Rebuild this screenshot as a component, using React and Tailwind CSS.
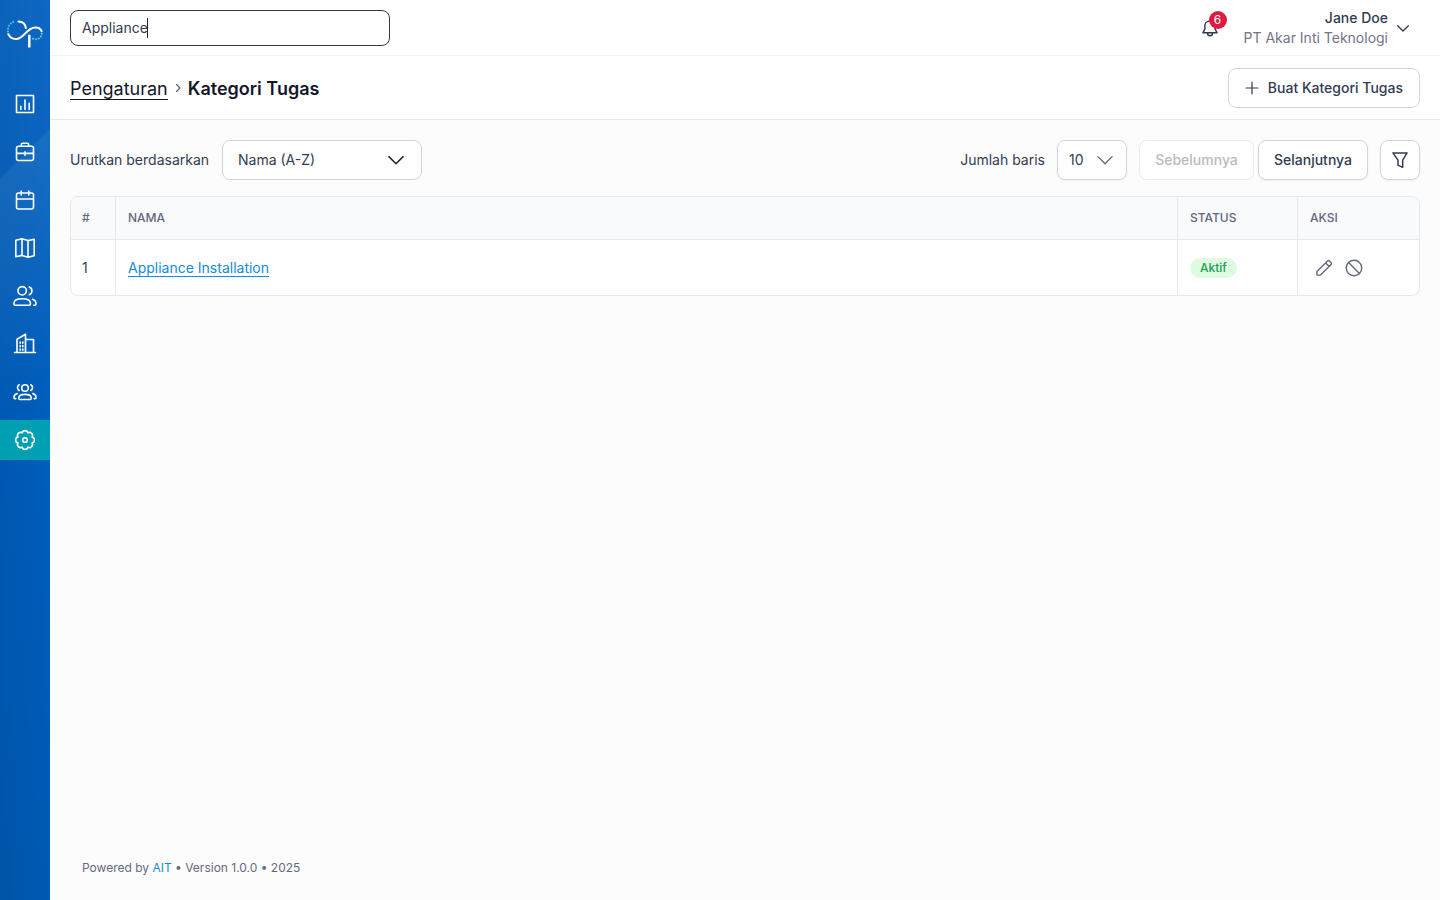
import clsx from 'clsx';

function Icon({ children, className = 'size-6', strokeWidth = 1.5 }) {
  return (
    <svg
      viewBox="0 0 24 24"
      fill="none"
      stroke="currentColor"
      strokeWidth={strokeWidth}
      strokeLinecap="round"
      strokeLinejoin="round"
      className={clsx('shrink-0', className)}
    >
      {children}
    </svg>
  );
}

const menus = [
  {
    name: 'dashboard',
    icon: <path d="M3.5 3.5h17v17h-17zM7.8 14.3v3.2M12 8v9.500M16.200 11.300v6.200" />,
  },
  {
    name: 'tasks',
    icon: (
      <path d="M5.500 6.200h13a2 2 0 0 1 2 2v10.300a2 2 0 0 1-2 2h-13a2 2 0 0 1-2-2V8.200a2 2 0 0 1 2-2zM8.300 6V4.800c0-1 .6-1.600 1.600-1.600h4.200c1 0 1.600.6 1.600 1.600V6M3.500 13.400h17M12 11.700v3.500" />
    ),
  },
  {
    name: 'schedule',
    icon: (
      <path d="M5.500 5h13a2 2 0 0 1 2 2v12a2 2 0 0 1-2 2h-13a2 2 0 0 1-2-2V7a2 2 0 0 1 2-2zM3.500 11h17M8.200 3v4M15.800 3v4" />
    ),
  },
  {
    name: 'map',
    icon: (
      <path d="M2.800 4.200 9 2.800l6 1.800 6.200-1.400v16.500L15 21.200l-6-1.800-6.200 1.400zM9 2.800v16.600M15 4.600v16.600" />
    ),
  },
  {
    name: 'users',
    icon: (
      <>
        <circle cx="9.200" cy="6.800" r="4.200" />
        <path d="M1 19.200c0-2.600 3-4.400 8.200-4.400s8.200 1.800 8.200 4.400v.9c0 .7-.4 1.100-1.100 1.100H2.100c-.7 0-1.100-.4-1.100-1.100zM16.300 2.900a4.200 4.200 0 0 1 0 7.800M19.500 15.300c2.200.8 3.500 2.200 3.500 3.900v.9c0 .7-.4 1.100-1.100 1.100h-1.200" />
      </>
    ),
  },
  {
    name: 'company',
    icon: (
      <path d="M1.500 20.500h21M4 20.500V7.200l8.500-5v18.300M12.500 7.500h8v13M7.200 10v1.200M9.800 10v1.200M7.200 13.500v1.200M9.800 13.500v1.200M7.200 17v1.200M9.800 17v1.200" />
    ),
  },
  {
    name: 'teams',
    icon: (
      <>
        <circle cx="12" cy="8" r="3.300" />
        <path d="M5.800 18c0-2 2.200-3.600 6.200-3.600s6.200 1.600 6.200 3.600v.6c0 .6-.3.900-.9.900H6.700c-.6 0-.9-.3-.9-.9zM6.200 4.700a3.300 3.300 0 0 0 0 5.800M17.800 4.700a3.300 3.300 0 0 1 0 5.800M4.200 13.600C2.200 14.300 1 15.500 1 17v.7c0 .6.3.9.900.9h.9M19.800 13.600c2 .7 3.200 1.900 3.200 3.400v.7c0 .6-.3.900-.9.900h-.9" />
      </>
    ),
  },
  {
    name: 'settings',
    active: true,
    icon: (
      <>
        <path d="M9.050 4.890a3.050 3.050 0 0 1 5.900 0a3.050 3.050 0 0 1 4.160 4.160a3.050 3.050 0 0 1 0 5.900a3.050 3.050 0 0 1-4.160 4.160a3.050 3.050 0 0 1-5.900 0a3.050 3.050 0 0 1-4.160-4.160a3.050 3.050 0 0 1 0-5.900a3.050 3.050 0 0 1 4.160-4.160z" />
        <circle cx="12" cy="12" r="2.300" />
      </>
    ),
  },
];

function Logo() {
  return (
    <svg viewBox="0 0 36 28" fill="none" strokeWidth="2" strokeLinecap="round" className="h-7 w-9">
      <path
        d="M11.500 1.400c4 .2 6.900 2.900 7.400 6.700M1.300 14.200c1.500 3.200 4.900 5 8.400 4.700 7.800-.6 9.800-11.500 18.600-11.500 3 0 5.500 1.500 6.300 3.800"
        stroke="#fff"
      />
      <path d="M22.300 14.800v12.700" stroke="#fff" strokeWidth="2.500" strokeLinecap="butt" />
      <path d="M1 11.500C.4 6 4 1.800 9 1.400" stroke="#45d0e6" strokeWidth="1.900" strokeDasharray="0 2.900" />
      <path d="M34.800 13.700c-.2 3.400-3.200 5.800-6.700 5.500-1.500-.1-2.800-.7-3.800-1.700" stroke="#55e0e0" strokeWidth="1.900" strokeDasharray="0 2.900" />
    </svg>
  );
}

function Sidebar() {
  return (
    <aside className="flex w-[50px] shrink-0 flex-col bg-[linear-gradient(135deg,transparent_0_126px,#ffffff0f_127px,transparent_300px),linear-gradient(to_right,#0000000e,#00000000),linear-gradient(to_bottom,#0d68c4_0,#0a65c1_130px,#005ebd_400px,#0059b2_900px)]">
      <div className="flex h-20 items-start justify-center pt-5">
        <Logo />
      </div>
      <nav className="flex flex-col gap-2 pt-1 text-white">
        {menus.map((menu) => (
          <a
            key={menu.name}
            className={clsx('flex h-10 items-center justify-center', menu.active && 'bg-[#009fb2]')}
          >
            <Icon strokeWidth={1.600}>{menu.icon}</Icon>
          </a>
        ))}
      </nav>
    </aside>
  );
}

function Topbar() {
  return (
    <header className="flex h-14 shrink-0 items-center justify-between border-b border-[#f3f4f6] bg-white px-5">
      <div className="flex h-9 w-80 items-center rounded-lg border border-[#333b50] px-[11px]">
        <span>Appliance</span>
        <span className="-ml-px h-5 w-px bg-[#1f2937]" />
      </div>
      <div className="flex items-center">
        <div className="relative mr-6 size-5">
          <Icon className="size-5" strokeWidth={1.800}>
            <path d="M12 3.500c-3.700 0-6.200 2.700-6.200 6.200v3.600L3.500 17.800h17l-2.300-4.500V9.700c0-3.500-2.500-6.200-6.200-6.200zM9 18c0 2 1.200 3.300 3 3.300s3-1.300 3-3.300" />
          </Icon>
          <span className="absolute -top-[7px] left-[9px] flex size-[18px] items-center justify-center rounded-full bg-[#dc1c43] text-xs text-white">
            6
          </span>
        </div>
        <div className="text-right leading-5">
          <p className="font-medium">Jane Doe</p>
          <p className="text-[#737389]">PT Akar Inti Teknologi</p>
        </div>
        <Icon className="mr-[9px] ml-[7px] size-4" strokeWidth={2}>
          <path d="m4 8.500 8 8 8-8" />
        </Icon>
      </div>
    </header>
  );
}

function PageHeader() {
  return (
    <div className="flex h-16 shrink-0 items-center justify-between border-b border-[#e5e7eb] bg-white px-5">
      <div className="flex items-center pt-0.5 text-lg text-[#14172a]">
        <a className="border-b border-[#14172a] pt-0.5 leading-5">Pengaturan</a>
        <Icon className="mx-1 mb-0.5 size-3 text-[#555b6b]" strokeWidth={2.200}>
          <path d="m9 5 7 7-7 7" />
        </Icon>
        <h1 className="font-semibold">Kategori Tugas</h1>
      </div>
      <button className="flex h-10 items-center rounded-lg border border-[#d1d5db] bg-white px-4 font-medium">
        <Icon className="mr-2 -ml-px size-4" strokeWidth={1.800}>
          <path d="M12 3v18M3 12h18" />
        </Icon>
        Buat Kategori Tugas
      </button>
    </div>
  );
}

function Toolbar() {
  return (
    <div className="flex h-10 items-center justify-between">
      <div className="flex items-center">
        <span className="w-[152px]">Urutkan berdasarkan</span>
        <div className="flex h-10 w-[200px] items-center justify-between rounded-lg border border-[#d1d5db] bg-white px-[15px]">
          Nama (A-Z)
          <Icon className="size-5 text-[#1f2937]" strokeWidth={1.900}>
            <path d="m3.500 8 8.500 8.500L20.500 8" />
          </Icon>
        </div>
      </div>
      <div className="flex items-center">
        <span className="mr-3">Jumlah baris</span>
        <div className="flex h-10 w-[70px] items-center justify-between rounded-lg border border-[#d1d5db] bg-white px-[11px] shadow-xs">
          10
          <Icon className="size-5 text-[#5b6478]">
            <path d="m3.500 8 8.500 8.500L20.500 8" />
          </Icon>
        </div>
        <button className="ml-3 h-10 w-[115px] rounded-lg border border-[#ebecee] bg-white font-medium text-[#b9bbc2]">
          Sebelumnya
        </button>
        <button className="ml-1 h-10 w-[110px] rounded-lg border border-[#d1d5db] bg-white font-medium shadow-xs">
          Selanjutnya
        </button>
        <button className="ml-3 flex size-10 items-center justify-center rounded-lg border border-[#d1d5db] bg-white shadow-xs">
          <Icon className="size-5" strokeWidth={1.800}>
            <path d="M3.500 3.500h17l-5.300 8.700v8.600l-5.600-2.600v-6z" />
          </Icon>
        </button>
      </div>
    </div>
  );
}

function TaskTable() {
  return (
    <div className="mt-4 overflow-hidden rounded-lg border border-[#e5e9eb] bg-white">
      <table className="w-full table-fixed border-separate border-spacing-0 text-left">
        <thead className="bg-[#f9fafc] text-xs text-[#62667c]">
          <tr className="*:h-[43px] *:border-b *:border-[#e5e9eb] *:font-medium">
            <th className="w-[45px] border-r pl-[11px]">#</th>
            <th className="border-r pl-3">NAMA</th>
            <th className="w-[120px] border-r pl-3">STATUS</th>
            <th className="w-[121px] pl-3">AKSI</th>
          </tr>
        </thead>
        <tbody>
          <tr className="*:h-[55px] *:border-[#e5e9eb]">
            <td className="border-r pl-[11px]">1</td>
            <td className="border-r pl-3">
              <a className="inline-block border-b border-[#158bdb] leading-[17px] text-[#158bdb]">
                Appliance Installation
              </a>
            </td>
            <td className="border-r pl-3">
              <span className="flex h-5 w-[47px] items-center justify-center rounded-full bg-[#defde0] text-xs font-medium text-[#1d9a58]">
                Aktif
              </span>
            </td>
            <td className="pl-4 text-[#666880]">
              <div className="flex items-center gap-2.5">
                <Icon className="size-5" strokeWidth={1.700}>
                  <path d="M3.500 20.500v-4.300L16.300 3.600a1.500 1.500 0 0 1 2.100 0l2.200 2.200a1.500 1.500 0 0 1 0 2.100L7.800 20.500zM14 6l4.200 4.200" />
                </Icon>
                <Icon className="size-5" strokeWidth={1.700}>
                  <circle cx="12" cy="12" r="9.300" />
                  <path d="m5.500 5.500 13 13" />
                </Icon>
              </div>
            </td>
          </tr>
        </tbody>
      </table>
    </div>
  );
}

function App() {
  return (
    <div className="flex h-screen bg-[#fcfcfd] font-['Inter',sans-serif] text-sm text-[#333b50]">
      <Sidebar />
      <div className="flex min-w-0 flex-1 flex-col">
        <Topbar />
        <PageHeader />
        <main className="flex-1 px-5 pt-5">
          <Toolbar />
          <TaskTable />
        </main>
        <footer className="px-8 pb-6 text-xs text-[#666a7c]">
          Powered by <a className="text-[#158bdb]">AIT</a> • Version 1.0.0 • 2025
        </footer>
      </div>
    </div>
  );
}

export default App;
